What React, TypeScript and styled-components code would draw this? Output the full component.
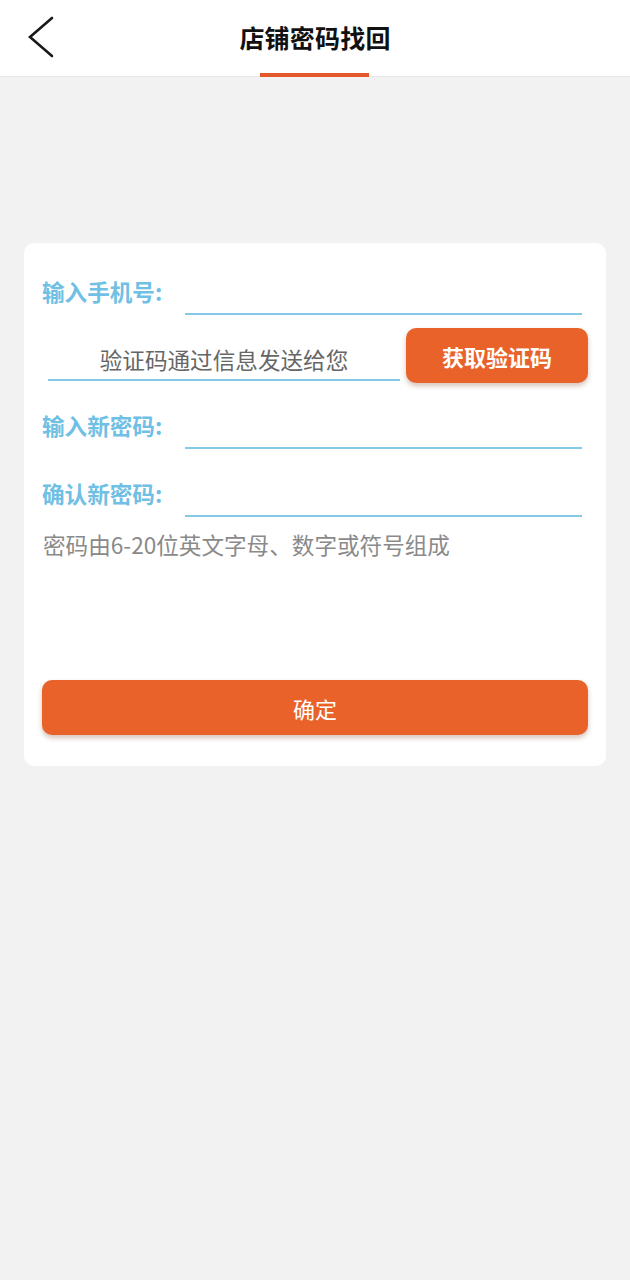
import styled, { createGlobalStyle } from "styled-components";

const GlobalStyle = createGlobalStyle`
  html, body {
    margin: 0;
    padding: 0;
    background: #f2f2f2;
    font-family: "Noto Sans CJK SC", "Noto Sans", sans-serif;
  }
  * { box-sizing: border-box; }
`;

const Page = styled.div`
  min-height: 1280px;
  background: #f2f2f2;
`;

const Header = styled.header`
  position: relative;
  height: 77px;
  background: #fff;
  border-bottom: 1px solid #e6e6e6;
  display: flex;
  align-items: center;
  justify-content: center;
`;

const BackButton = styled.button`
  position: absolute;
  left: 24px;
  top: 14px;
  width: 34px;
  height: 46px;
  padding: 0;
  border: none;
  background: none;
  display: flex;
  align-items: center;
  justify-content: center;
`;

const Title = styled.h1`
  margin: 0 0 2px;
  font-size: 25px;
  font-weight: 700;
  color: #111;
  letter-spacing: 0.2px;
`;

const TitleBar = styled.span`
  position: absolute;
  left: 260px;
  bottom: -1px;
  width: 109px;
  height: 4px;
  background: #e2582a;
`;

const Card = styled.main`
  margin: 166px 24px 0;
  background: #fff;
  border-radius: 10px;
  padding: 30px 18px 31px;
  display: flex;
  flex-direction: column;
`;

const Row = styled.div<{ $top?: number; $h?: number }>`
  display: flex;
  align-items: center;
  height: ${(p) => p.$h ?? 42}px;
  margin-top: ${(p) => p.$top ?? 0}px;
`;

const Label = styled.label`
  width: 143px;
  flex-shrink: 0;
  margin-bottom: 4px;
  font-size: 22.6px;
  font-weight: 700;
  color: #70bfe4;
  line-height: 30px;
`;

const Input = styled.input`
  flex: 1;
  height: 42px;
  margin-right: 6px;
  align-self: flex-end;
  border: none;
  border-bottom: 2px solid #86c9e7;
  background: transparent;
  outline: none;
  font-family: inherit;
  font-size: 22px;
  color: #333;
`;

const CodeInput = styled.input`
  width: 352px;
  height: 53px;
  margin-left: 6px;
  padding-top: 12px;
  align-self: flex-start;
  border: none;
  border-bottom: 2px solid #86c9e7;
  background: transparent;
  outline: none;
  text-align: center;
  font-family: inherit;
  font-size: 22.6px;
  color: #333;
  &::placeholder {
    color: #666;
  }
`;

const OrangeButton = styled.button<{ $bold?: boolean }>`
  height: 55px;
  border: none;
  border-radius: 10px;
  background: #e9622a;
  color: #fff;
  font-family: inherit;
  font-size: 22px;
  font-weight: ${(p) => (p.$bold ? 700 : 400)};
  box-shadow: 0 3px 5px rgba(120, 60, 30, 0.3);
`;

const CodeButton = styled(OrangeButton)`
  width: 182px;
  margin-left: 6px;
`;

const SubmitButton = styled(OrangeButton)`
  width: 100%;
  margin-top: 120px;
`;

const Hint = styled.p`
  margin: 13px 0 0 1px;
  font-size: 22.6px;
  line-height: 30px;
  color: #8a8a8a;
`;

function BackIcon() {
  return (
    <svg width="28" height="42" viewBox="0 0 28 42">
      <polyline
        points="25,2 3,21 25,40"
        fill="none"
        stroke="#1a1a1a"
        strokeWidth="2.6"
        strokeLinecap="round"
        strokeLinejoin="miter"
      />
    </svg>
  );
}

export default function App() {
  return (
    <Page>
      <GlobalStyle />
      <Header>
        <BackButton aria-label="返回">
          <BackIcon />
        </BackButton>
        <Title>店铺密码找回</Title>
        <TitleBar />
      </Header>

      <Card>
        <Row>
          <Label>输入手机号:</Label>
          <Input type="tel" />
        </Row>
        <Row $top={13} $h={55}>
          <CodeInput placeholder="验证码通过信息发送给您" />
          <CodeButton $bold>获取验证码</CodeButton>
        </Row>
        <Row $top={24}>
          <Label>输入新密码:</Label>
          <Input type="password" />
        </Row>
        <Row $top={26}>
          <Label>确认新密码:</Label>
          <Input type="password" />
        </Row>
        <Hint>密码由6-20位英文字母、数字或符号组成</Hint>
        <SubmitButton>确定</SubmitButton>
      </Card>
    </Page>
  );
}
